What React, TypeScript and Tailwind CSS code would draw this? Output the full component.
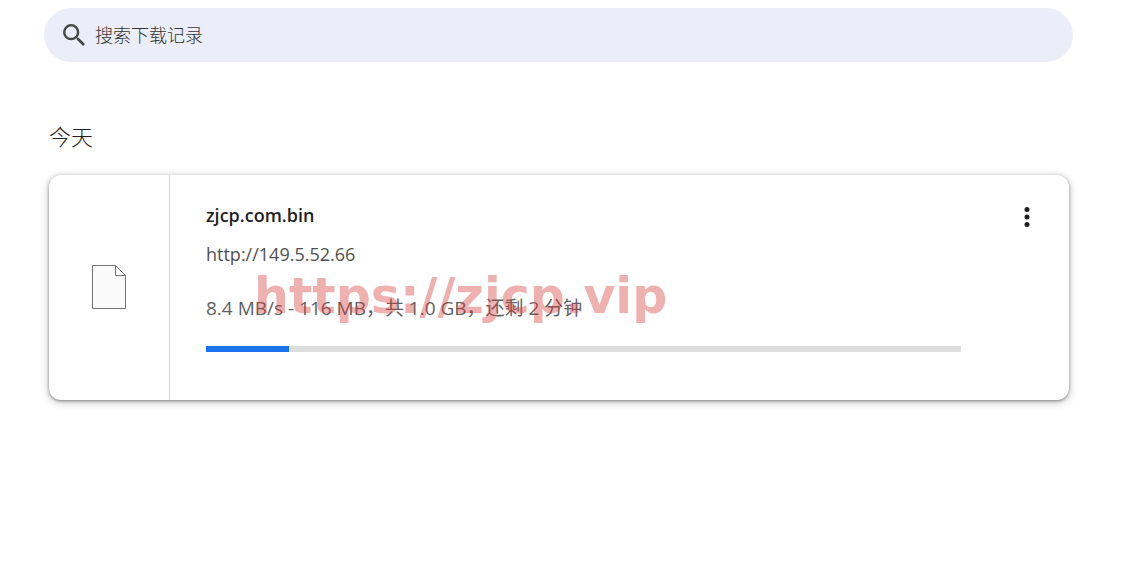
import { useState } from "react";

const LATIN = "font-['Open_Sans','Noto_Sans_CJK_SC',sans-serif]";

const downloads = [
  {
    id: 1,
    name: "zjcp.com.bin",
    url: "http://149.5.52.66",
    status: "8.4 MB/s - 116 MB，共 1.0 GB，还剩 2 分钟",
    progress: 11,
  },
];

function SearchIcon() {
  return (
    <svg viewBox="3 3 17.5 17.5" className="h-[22px] w-[22px] shrink-0 fill-[#474747]" aria-hidden="true">
      <path d="M15.5 14h-.79l-.28-.27A6.471 6.471 0 0 0 16 9.5 6.5 6.5 0 1 0 9.5 16c1.61 0 3.09-.59 4.23-1.57l.27.28v.79l5 4.99L20.49 19l-4.99-5zm-6 0C7.01 14 5 11.99 5 9.5S7.01 5 9.5 5 14 7.01 14 9.5 11.99 14 9.5 14z" />
    </svg>
  );
}

function FileIcon() {
  return (
    <svg viewBox="0 0 34 44" className="h-11 w-[34px]" aria-hidden="true">
      <path d="M.5.5h23l10 10v33H.5z" fill="#fafafa" stroke="#737373" />
      <path d="M23.5.5v10h10z" fill="#fff" stroke="#737373" />
    </svg>
  );
}

function MoreIcon() {
  return (
    <svg viewBox="0 0 6 20" className="h-5 w-1.5 fill-[#1f1f1f]" aria-hidden="true">
      <circle cx="3" cy="2.5" r="2.5" />
      <circle cx="3" cy="10" r="2.5" />
      <circle cx="3" cy="17.5" r="2.5" />
    </svg>
  );
}

function DownloadCard({ item }: { item: (typeof downloads)[number] }) {
  return (
    <article className="relative flex min-h-[225px] rounded-xl bg-white shadow-[0_1px_3px_rgba(0,0,0,0.4),0_2px_8px_1px_rgba(0,0,0,0.2)]">
      <div className="flex w-[121px] shrink-0 items-center justify-center border-r border-[#d5d5d5] pb-0.5">
        <FileIcon />
      </div>
      <div className="min-w-0 flex-1 pt-6 pl-9 text-lg leading-8">
        <h3 className="font-semibold text-[#1f1f1f]">{item.name}</h3>
        <a href={item.url} className="mt-[7px] block text-[#505050]">
          {item.url}
        </a>
        <p className="mt-[22px] text-[19px] text-[#5f5f5f]">{item.status}</p>
        <div
          className="mt-[22px] h-1.5 bg-[#dddddd]"
          role="progressbar"
          aria-label={item.name}
          aria-valuenow={item.progress}
          aria-valuemin={0}
          aria-valuemax={100}
        >
          <div className="h-full bg-[#1a73e8]" style={{ width: `${item.progress}%` }} />
        </div>
      </div>
      <div className="flex w-[108px] shrink-0 items-start justify-end pt-6 pr-6">
        <button type="button" aria-label="更多操作" className="flex h-9 w-9 items-center justify-center">
          <MoreIcon />
        </button>
      </div>
      <span className="pointer-events-none absolute top-[90px] left-[205px] font-['DejaVu_Sans',sans-serif] text-[49px] leading-16 font-bold whitespace-nowrap text-[#d73a3a]/40">
        https://zjcp.vip
      </span>
    </article>
  );
}

export default function App() {
  const [query, setQuery] = useState("");

  const visible = downloads.filter((item) => item.name.includes(query));

  return (
    <main className={`min-h-screen bg-white pt-2 pr-[62px] pl-11 ${LATIN}`}>
      <label className="flex h-[54px] items-center gap-2.5 rounded-full bg-[#ebeef8] px-[19px]">
        <SearchIcon />
        <input
          type="text"
          aria-label="搜索下载记录"
          placeholder="搜索下载记录"
          value={query}
          onChange={(e) => setQuery(e.target.value)}
          className="min-w-0 flex-1 bg-transparent text-lg font-light outline-none placeholder:text-[#333333]"
        />
      </label>

      <section className="pt-[58px] pr-1 pl-[5px]">
        <h2 className="mb-[23px] text-[22px] leading-8 font-light text-[#1f1f1f]">今天</h2>
        {visible.map((item) => (
          <DownloadCard key={item.id} item={item} />
        ))}
      </section>
    </main>
  );
}
